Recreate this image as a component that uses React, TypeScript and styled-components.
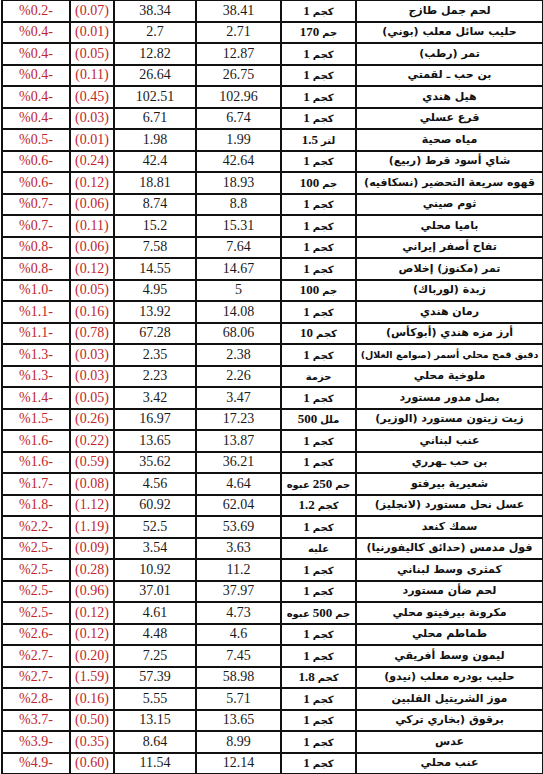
import React from "react";
import styled, { createGlobalStyle } from "styled-components";

type Item = {
  name: string;
  unit: string[];
  oldPrice: string;
  newPrice: string;
  change: string;
  percent: string;
};

// unit tokens are listed left to right, the way the sheet shows them
const items: Item[] = [
  { name: "لحم جمل طازج", unit: ["1", "كجم"], oldPrice: "38.41", newPrice: "38.34", change: "(0.07)", percent: "%0.2-" },
  { name: "حليب سائل معلب (بوني)", unit: ["170", "جم"], oldPrice: "2.71", newPrice: "2.7", change: "(0.01)", percent: "%0.4-" },
  { name: "تمر (رطب)", unit: ["1", "كجم"], oldPrice: "12.87", newPrice: "12.82", change: "(0.05)", percent: "%0.4-" },
  { name: "بن حب ـ لقمتي", unit: ["1", "كجم"], oldPrice: "26.75", newPrice: "26.64", change: "(0.11)", percent: "%0.4-" },
  { name: "هيل هندي", unit: ["1", "كجم"], oldPrice: "102.96", newPrice: "102.51", change: "(0.45)", percent: "%0.4-" },
  { name: "قرع عسلي", unit: ["1", "كجم"], oldPrice: "6.74", newPrice: "6.71", change: "(0.03)", percent: "%0.4-" },
  { name: "مياه صحية", unit: ["1.5", "لتر"], oldPrice: "1.99", newPrice: "1.98", change: "(0.01)", percent: "%0.5-" },
  { name: "شاي أسود قرط (ربيع)", unit: ["1", "كجم"], oldPrice: "42.64", newPrice: "42.4", change: "(0.24)", percent: "%0.6-" },
  { name: "قهوه سريعة التحضير (نسكافيه)", unit: ["100", "جم"], oldPrice: "18.93", newPrice: "18.81", change: "(0.12)", percent: "%0.6-" },
  { name: "ثوم صيني", unit: ["1", "كجم"], oldPrice: "8.8", newPrice: "8.74", change: "(0.06)", percent: "%0.7-" },
  { name: "باميا محلي", unit: ["1", "كجم"], oldPrice: "15.31", newPrice: "15.2", change: "(0.11)", percent: "%0.7-" },
  { name: "تفاح أصفر إيراني", unit: ["1", "كجم"], oldPrice: "7.64", newPrice: "7.58", change: "(0.06)", percent: "%0.8-" },
  { name: "تمر (مكنوز) إخلاص", unit: ["1", "كجم"], oldPrice: "14.67", newPrice: "14.55", change: "(0.12)", percent: "%0.8-" },
  { name: "زبدة (لورباك)", unit: ["100", "جم"], oldPrice: "5", newPrice: "4.95", change: "(0.05)", percent: "%1.0-" },
  { name: "رمان هندي", unit: ["1", "كجم"], oldPrice: "14.08", newPrice: "13.92", change: "(0.16)", percent: "%1.1-" },
  { name: "أرز مزه هندي (أبوكأس)", unit: ["10", "كجم"], oldPrice: "68.06", newPrice: "67.28", change: "(0.78)", percent: "%1.1-" },
  { name: "دقيق قمح محلي أسمر (صوامع الغلال)", unit: ["1", "كجم"], oldPrice: "2.38", newPrice: "2.35", change: "(0.03)", percent: "%1.3-" },
  { name: "ملوخية محلي", unit: ["حزمة"], oldPrice: "2.26", newPrice: "2.23", change: "(0.03)", percent: "%1.3-" },
  { name: "بصل مدور مستورد", unit: ["1", "كجم"], oldPrice: "3.47", newPrice: "3.42", change: "(0.05)", percent: "%1.4-" },
  { name: "زيت زيتون مستورد (الوزير)", unit: ["500", "ملل"], oldPrice: "17.23", newPrice: "16.97", change: "(0.26)", percent: "%1.5-" },
  { name: "عنب لبناني", unit: ["1", "كجم"], oldPrice: "13.87", newPrice: "13.65", change: "(0.22)", percent: "%1.6-" },
  { name: "بن حب ـهرري", unit: ["1", "كجم"], oldPrice: "36.21", newPrice: "35.62", change: "(0.59)", percent: "%1.6-" },
  { name: "شعيرية بيرفتو", unit: ["عبوه", "250", "جم"], oldPrice: "4.64", newPrice: "4.56", change: "(0.08)", percent: "%1.7-" },
  { name: "عسل نحل مستورد (لانجليز)", unit: ["1.2", "كجم"], oldPrice: "62.04", newPrice: "60.92", change: "(1.12)", percent: "%1.8-" },
  { name: "سمك كنعد", unit: ["1", "كجم"], oldPrice: "53.69", newPrice: "52.5", change: "(1.19)", percent: "%2.2-" },
  { name: "فول مدمس (حدائق كاليفورنيا)", unit: ["عليه"], oldPrice: "3.63", newPrice: "3.54", change: "(0.09)", percent: "%2.5-" },
  { name: "كمثرى وسط لبناني", unit: ["1", "كجم"], oldPrice: "11.2", newPrice: "10.92", change: "(0.28)", percent: "%2.5-" },
  { name: "لحم ضأن مستورد", unit: ["1", "كجم"], oldPrice: "37.97", newPrice: "37.01", change: "(0.96)", percent: "%2.5-" },
  { name: "مكرونة بيرفيتو محلي", unit: ["عبوه", "500", "جم"], oldPrice: "4.73", newPrice: "4.61", change: "(0.12)", percent: "%2.5-" },
  { name: "طماطم محلي", unit: ["1", "كجم"], oldPrice: "4.6", newPrice: "4.48", change: "(0.12)", percent: "%2.6-" },
  { name: "ليمون وسط أفريقي", unit: ["1", "كجم"], oldPrice: "7.45", newPrice: "7.25", change: "(0.20)", percent: "%2.7-" },
  { name: "حليب بودره معلب (نيدو)", unit: ["1.8", "كجم"], oldPrice: "58.98", newPrice: "57.39", change: "(1.59)", percent: "%2.7-" },
  { name: "موز الشريتيل الفلبين", unit: ["1", "كجم"], oldPrice: "5.71", newPrice: "5.55", change: "(0.16)", percent: "%2.8-" },
  { name: "برقوق (بخاري تركي", unit: ["1", "كجم"], oldPrice: "13.65", newPrice: "13.15", change: "(0.50)", percent: "%3.7-" },
  { name: "عدس", unit: ["1", "كجم"], oldPrice: "8.99", newPrice: "8.64", change: "(0.35)", percent: "%3.9-" },
  { name: "عنب محلي", unit: ["1", "كجم"], oldPrice: "12.14", newPrice: "11.54", change: "(0.60)", percent: "%4.9-" },
];

// widths from right to left: name, unit, old price, new price, change, percent
const columnWidths = [187, 75, 85, 82, 44, 68];

const isNumber = (t: string) => /^[0-9.]+$/.test(t);

const GlobalStyle = createGlobalStyle`
  html, body {
    margin: 0;
    padding: 0;
    background: #ffffff;
  }
  body {
    overflow: hidden;
  }
`;

const Sheet = styled.div`
  padding-left: 1px;
  margin-top: -1px;
`;

const PriceTable = styled.table`
  width: 541px;
  table-layout: fixed;
  border-collapse: collapse;
  direction: rtl;
`;

const Col = styled.col<{ $width: number }>`
  width: ${(p) => p.$width}px;
`;

const Row = styled.tr`
  height: 21.5px;
`;

const Cell = styled.td`
  border: 2px solid #111;
  padding: 0 2px;
  text-align: center;
  vertical-align: middle;
  white-space: nowrap;
  overflow: hidden;
  line-height: 16px;
`;

const NameCell = styled(Cell)<{ $long?: boolean }>`
  direction: rtl;
  padding: 0;
  font-family: "DejaVu Sans", "Liberation Sans", sans-serif;
  font-weight: bold;
  font-size: ${(p) => (p.$long ? "9.5px" : "11px")};
  color: #111;
`;

const UnitCell = styled(Cell)`
  padding: 0;
  color: #111;
`;

const UnitLine = styled.span`
  display: inline-flex;
  direction: ltr;
  align-items: baseline;
  gap: 3px;
`;

const UnitNumber = styled.span`
  font-family: "Liberation Serif", "Times New Roman", serif;
  font-weight: bold;
  font-size: 13px;
`;

const UnitWord = styled.span`
  direction: rtl;
  font-family: "DejaVu Sans", sans-serif;
  font-weight: bold;
  font-size: 10px;
`;

const NumberCell = styled(Cell)<{ $red?: boolean }>`
  direction: ltr;
  font-family: "Liberation Serif", "Times New Roman", serif;
  font-size: 14px;
  color: ${(p) => (p.$red ? "#c0262c" : "#1a1a1a")};
`;

const App: React.FC = () => {
  return (
    <>
      <GlobalStyle />
      <Sheet>
        <PriceTable>
          <colgroup>
            {columnWidths.map((w, i) => (
              <Col key={i} $width={w} />
            ))}
          </colgroup>
          <tbody>
            {items.map((item) => (
              <Row key={item.name}>
                <NameCell $long={item.name.length > 28}>{item.name}</NameCell>
                <UnitCell>
                  <UnitLine>
                    {item.unit.map((t, i) =>
                      isNumber(t) ? (
                        <UnitNumber key={i}>{t}</UnitNumber>
                      ) : (
                        <UnitWord key={i}>{t}</UnitWord>
                      )
                    )}
                  </UnitLine>
                </UnitCell>
                <NumberCell>{item.oldPrice}</NumberCell>
                <NumberCell>{item.newPrice}</NumberCell>
                <NumberCell $red>{item.change}</NumberCell>
                <NumberCell $red>{item.percent}</NumberCell>
              </Row>
            ))}
          </tbody>
        </PriceTable>
      </Sheet>
    </>
  );
};

export default App;
